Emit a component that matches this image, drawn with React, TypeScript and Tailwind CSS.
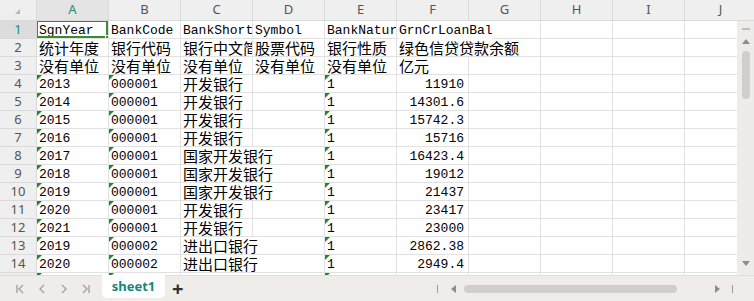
import React from 'react'

const cols = ['A', 'B', 'C', 'D', 'E', 'F', 'G', 'H', 'I', 'J']

type Cell = { v: string; mark?: boolean; right?: boolean; spill?: boolean }

const txt = (v: string, mark = false): Cell => ({ v, mark })
const num = (v: string): Cell => ({ v, right: true })

const top: Cell[][] = [
	[txt('SgnYear'), txt('BankCode'), txt('BankShortName'), txt('Symbol'), txt('BankNature'), { v: 'GrnCrLoanBal', spill: true }],
	[txt('统计年度'), txt('银行代码'), txt('银行中文简称'), txt('股票代码'), txt('银行性质'), { v: '绿色信贷贷款余额', spill: true }],
	[txt('没有单位'), txt('没有单位'), txt('没有单位'), txt('没有单位'), txt('没有单位'), txt('亿元')]
]

const body: [string, string, string, string][] = [
	['2013', '000001', '开发银行', '11910'],
	['2014', '000001', '开发银行', '14301.6'],
	['2015', '000001', '开发银行', '15742.3'],
	['2016', '000001', '开发银行', '15716'],
	['2017', '000001', '国家开发银行', '16423.4'],
	['2018', '000001', '国家开发银行', '19012'],
	['2019', '000001', '国家开发银行', '21437'],
	['2020', '000001', '开发银行', '23417'],
	['2021', '000001', '开发银行', '23000'],
	['2019', '000002', '进出口银行', '2862.38'],
	['2020', '000002', '进出口银行', '2949.4'],
	['2021', '000002', '进出口银行', '3100']
]

const rows: Cell[][] = [
	...top,
	...body.map(([y, c, n, v]) => [
		txt(y, true),
		txt(c, true),
		{ v: n, spill: n.length > 4 },
		txt(''),
		txt('1', true),
		num(v)
	])
]

const isCjk = (s: string) => /[\u4e00-\u9fff]/.test(s)

const Mark = () => (
	<span className="absolute left-0 top-0 w-0 h-0 border-t-[5px] border-r-[5px] border-t-[#1f8a2a] border-r-transparent" />
)

const GridCell = ({ cell, first }: { cell?: Cell; first: boolean }) => {
	const v = cell?.v || ''
	const cjk = isCjk(v)
	return (
		<div
			className={`relative w-[72px] shrink-0 h-[18px] border-b border-[#e1e1e1] ${cell?.spill ? 'z-10 overflow-visible' : 'border-r overflow-hidden'} ${cell?.right ? 'text-right pr-[4px]' : 'pl-[2px]'}`}
		>
			{cell?.mark && <Mark />}
			<span
				className={`block whitespace-nowrap text-black ${cjk ? 'text-[15px] leading-[17px]' : 'text-[13px] leading-[19px]'} ${cell?.spill ? 'bg-white w-max pr-[1px]' : ''}`}
				style={{ fontFamily: cjk ? '"Noto Sans CJK SC", sans-serif' : '"Liberation Mono", monospace' }}
			>
				{v}
			</span>
			{first && (
				<>
					<span className="absolute -left-[2px] -top-[2px] -right-[1px] -bottom-[1px] border-[3px] border-[#3b8a2e] z-20" />
					<span className="absolute -right-[3px] -bottom-[3px] w-[6px] h-[6px] bg-[#3b8a2e] border border-white z-30" />
				</>
			)}
		</div>
	)
}

const Chev = ({ d }: { d: string }) => (
	<svg width="12" height="12" viewBox="0 0 12 12" fill="none" stroke="#a3a3a3" strokeWidth="1.4">
		<path d={d} />
	</svg>
)

const App = () => {
	const sans = { fontFamily: '"Noto Sans", "Liberation Sans", sans-serif' }
	return (
		<div className="w-[754px] h-[301px] overflow-hidden bg-white flex flex-col select-none">
			{/* column header */}
			<div className="flex h-[21px] shrink-0 bg-[#efefef] border-b border-[#dadada]" style={sans}>
				<div className="relative w-[37px] shrink-0 border-r border-[#dadada]">
					<span className="absolute right-[16px] bottom-[6px] w-0 h-0 border-b-[5px] border-l-[5px] border-b-[#b5b5b5] border-l-transparent" />
				</div>
				{cols.map(c => (
					<div
						key={c}
						className={`w-[72px] shrink-0 border-r border-[#dadada] flex items-center justify-center text-[13px] ${c === 'A' ? 'bg-[#e4e4e4] text-[#1f8d7c]' : 'text-[#555]'}`}
					>
						{c}
					</div>
				))}
			</div>
			<div className="flex flex-1 min-h-0">
				<div className="flex-1 min-w-0 overflow-hidden">
					{rows.map((r, i) => (
						<div key={i} className="flex">
							<div
								className={`w-[37px] shrink-0 h-[18px] border-r border-b border-[#dadada] flex items-center justify-center text-[13px] ${i === 0 ? 'bg-[#dcdcdc] text-[#1f8d7c]' : 'bg-[#efefef] text-[#555]'}`}
								style={sans}
							>
								{i + 1}
							</div>
							{cols.map((c, j) => (
								<GridCell key={c} cell={r[j]} first={i === 0 && j === 0} />
							))}
						</div>
					))}
				</div>
				{/* vertical scrollbar */}
				<div className="w-[17px] shrink-0 bg-[#eeeceb] flex flex-col items-center pt-[7px]">
					<span className="w-[8px] h-[2px] bg-[#bdbdbd]" />
					<span className="mt-[9px] w-0 h-0 border-l-[4px] border-r-[4px] border-b-[5px] border-l-transparent border-r-transparent border-b-[#8c8c8c]" />
					<span className="mt-[7px] w-[8px] h-[48px] rounded-full bg-[#d1cfce]" />
					<span className="mt-auto mb-[9px] w-0 h-0 border-l-[4px] border-r-[4px] border-t-[5px] border-l-transparent border-r-transparent border-t-[#8c8c8c]" />
				</div>
			</div>
			{/* sheet tabs */}
			<div className="h-[26px] shrink-0 flex items-stretch bg-[#efecea] border-t border-[#dedede]" style={sans}>
				<div className="flex items-center gap-[10px] pl-[14px] w-[102px]">
					<Chev d="M3 2v8M9 2 5 6l4 4" />
					<Chev d="M8 2 4 6l4 4" />
					<Chev d="M4 2l4 4-4 4" />
					<Chev d="M3 2l4 4-4 4M9 2v8" />
				</div>
				<div className="w-[63px] -mt-px mb-[3px] bg-white rounded-b-[5px] flex items-center justify-center text-[13px] font-bold text-[#16867e]">
					sheet1
				</div>
				<div className="flex items-center pl-[7px] text-[20px] leading-none font-bold text-[#333]">+</div>
				<div className="flex-1" />
				<div className="flex items-center w-[319px] pl-[2px]">
					<span className="w-px h-[8px] bg-[#9a9a9a]" />
					<span className="ml-[13px] w-0 h-0 border-t-[4px] border-b-[4px] border-r-[5px] border-t-transparent border-b-transparent border-r-[#8c8c8c]" />
					<span className="ml-[8px] w-[213px] h-[8px] rounded-full bg-[#d1cfce]" />
					<span className="ml-[38px] w-0 h-0 border-t-[4px] border-b-[4px] border-l-[5px] border-t-transparent border-b-transparent border-l-[#8c8c8c]" />
					<span className="ml-[12px] w-px h-[8px] bg-[#9a9a9a]" />
				</div>
			</div>
		</div>
	)
}

export default App
